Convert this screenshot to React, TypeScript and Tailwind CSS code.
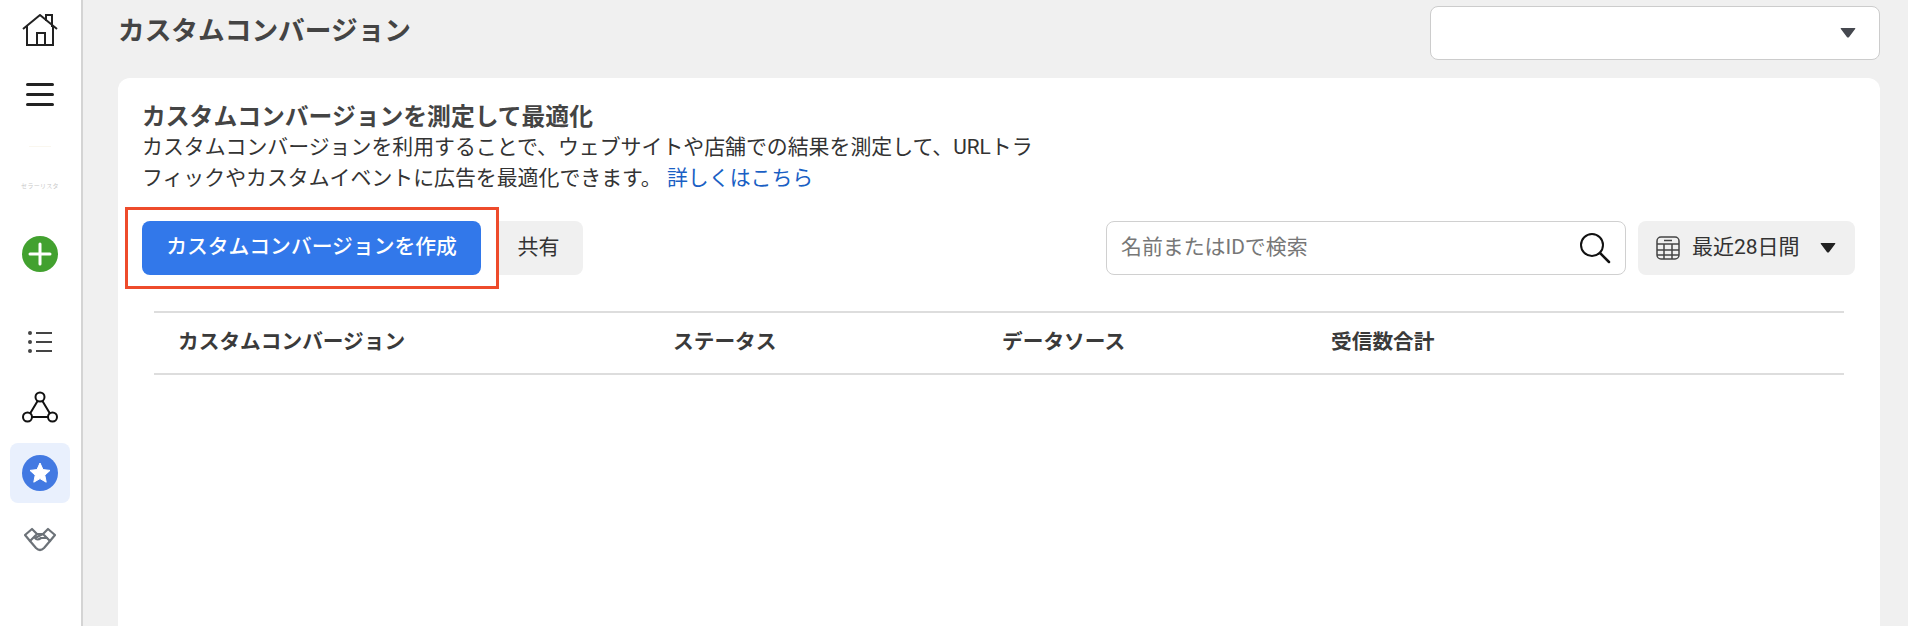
const jp = "font-['Roboto','Noto_Sans_CJK_JP',sans-serif]";

const HomeIcon = () => (
  <svg width="36" height="34" viewBox="0 0 36 34" fill="none" stroke="#222" strokeWidth="2">
    <path d="M1 15 L18 1 L35 15" strokeLinejoin="round" />
    <path d="M5 12 V31 H31 V12" />
    <path d="M15 31 V19 H23 V31" />
    <path d="M24 7 V1 H30 V13" />
  </svg>
);

const MenuIcon = () => (
  <div className="flex flex-col gap-[7px] w-[28px]">
    <div className="h-[3px] bg-[#222] rounded-sm" />
    <div className="h-[3px] bg-[#222] rounded-sm" />
    <div className="h-[3px] bg-[#222] rounded-sm" />
  </div>
);

const PlusIcon = () => (
  <svg width="36" height="36" viewBox="0 0 36 36">
    <circle cx="18" cy="18" r="18" fill="#42a12f" />
    <path d="M18 8 V28 M8 18 H28" stroke="#fff" strokeWidth="3" strokeLinecap="round" />
  </svg>
);

const ListIcon = () => (
  <svg width="26" height="24" viewBox="0 0 26 24" fill="#444">
    <circle cx="3" cy="3" r="2" />
    <circle cx="3" cy="12" r="2" />
    <circle cx="3" cy="21" r="2" />
    <rect x="9" y="2" width="16" height="2" />
    <rect x="9" y="11" width="16" height="2" />
    <rect x="9" y="20" width="16" height="2" />
  </svg>
);

const NetworkIcon = () => (
  <svg width="36" height="32" viewBox="0 0 36 32" fill="#fff" stroke="#111" strokeWidth="2">
    <path d="M18 6 L6 26 H30 Z" fill="none" />
    <circle cx="18" cy="6" r="4.5" />
    <circle cx="5.5" cy="26" r="4.5" />
    <circle cx="30.5" cy="26" r="4.5" />
  </svg>
);

const StarIcon = () => (
  <svg width="36" height="36" viewBox="0 0 36 36">
    <circle cx="18" cy="18" r="18" fill="#4279e2" />
    <path d="M18 8 L21 14.6 L28 15.4 L22.8 20.2 L24.2 27.2 L18 23.6 L11.8 27.2 L13.2 20.2 L8 15.4 L15 14.6 Z" fill="#fff" stroke="#fff" strokeLinejoin="round" />
  </svg>
);

const HandshakeIcon = () => (
  <svg width="32" height="26" viewBox="9 11 32 26" fill="none" stroke="#6c7278" strokeWidth="2.2" strokeLinejoin="round" strokeLinecap="round">
    <path d="M10 19 L17 13 L22 18 L15 25 Z" />
    <path d="M40 19 L33 13 L28 18 L35 25 Z" />
    <path d="M15 25 L21 32 Q25 36 29 32 L35 25" />
    <path d="M22 18 H28 L20 22 Q22 25 26 22 L32 22" />
  </svg>
);

const CaretIcon = ({ color }: { color: string }) => (
  <svg width="16" height="10" viewBox="0 0 14 9" fill={color}>
    <path d="M1 0 H13 Q14.2 0 13.4 1 L8 8 Q7 9 6 8 L0.6 1 Q-0.2 0 1 0 Z" />
  </svg>
);

const SearchIcon = () => (
  <svg width="32" height="32" viewBox="0 0 32 32" fill="none" stroke="#111" strokeWidth="2">
    <circle cx="13" cy="13" r="11" />
    <path d="M21 21 L30 30" strokeWidth="2.5" strokeLinecap="round" />
  </svg>
);

const CalendarIcon = () => (
  <svg width="24" height="24" viewBox="0 0 24 24" fill="none" stroke="#444" strokeWidth="1.5">
    <rect x="1" y="1" width="22" height="22" rx="4" />
    <path d="M1 8 H23 M1 14 H23 M1 19 H23 M8 8 V23 M16 8 V23" />
    <path d="M8 4.5 H16" />
  </svg>
);

const columns = [
  { label: "カスタムコンバージョン", width: "w-[495px]" },
  { label: "ステータス", width: "w-[329px]" },
  { label: "データソース", width: "w-[329px]" },
  { label: "受信数合計", width: "w-auto" },
];

export default function App() {
  return (
    <div className={`flex h-[626px] overflow-hidden bg-[#f0f0f0] ${jp}`}>
      <aside className="w-[83px] shrink-0 bg-white border-r-2 border-[#d4d4d4] flex flex-col items-center pt-[14px] pr-[1px]">
        <HomeIcon />
        <div className="mt-[35px]"><MenuIcon /></div>
        <div className="mt-[40px] h-[43px] flex flex-col items-center justify-between">
          <div className="w-[22px] h-[1px] bg-[#faf7ef]" />
          <span className="text-[6px] leading-none text-[#c9c9c9] tracking-wider">セラーリスタ</span>
        </div>
        <div className="mt-[47px]"><PlusIcon /></div>
        <div className="mt-[58px]"><ListIcon /></div>
        <div className="mt-[37px]"><NetworkIcon /></div>
        <div className="mt-[20px] w-[60px] h-[60px] rounded-lg bg-[#e9f0fd] flex items-center justify-center">
          <StarIcon />
        </div>
        <div className="mt-[24px]"><HandshakeIcon /></div>
      </aside>

      <main className="flex-1 min-w-0 flex flex-col pl-[35px] pr-[28px] pt-[6px]">
        <div className="flex items-center justify-between">
          <h1 className="text-[26.7px] font-bold text-[#444] -mt-[4px]">カスタムコンバージョン</h1>
          <div className="w-[450px] h-[54px] bg-white border border-[#cccccc] rounded-lg flex items-center justify-end pr-[23px]">
            <CaretIcon color="#45484f" />
          </div>
        </div>

        <section className="mt-[18px] flex-1 bg-white rounded-t-xl pt-[24px]">
          <div className="pl-[24px]">
            <h2 className="text-[23.8px] leading-[30px] font-bold text-[#444]">カスタムコンバージョンを測定して最適化</h2>
            <p className="whitespace-nowrap text-[20.9px] leading-[31px] text-[#333]">
              カスタムコンバージョンを利用することで、ウェブサイトや店舗での結果を測定して、URLトラ<br />
              フィックやカスタムイベントに広告を最適化できます。 <span className="text-[#1a5fc4]">詳しくはこちら</span>
            </p>
          </div>

          <div className="mt-[13px] flex items-center pl-[7px] pr-[25px]">
            <div className="border-[3px] border-[#ee4b2b] w-[374px] h-[82px] flex items-center pl-[14px] relative z-10">
              <button className="w-[339px] h-[54px] bg-[#3278ea] rounded-lg text-white text-[20.8px] font-medium">
                カスタムコンバージョンを作成
              </button>
            </div>
            <button className="w-[84px] h-[54px] bg-[#f0f0f0] rounded-r-lg text-[21px] text-[#333] pr-[5px]">共有</button>
            <div className="ml-auto w-[520px] h-[54px] border border-[#d0d0d0] rounded-lg flex items-center justify-between pl-[14px] pr-[14px]">
              <span className="text-[20.9px] text-[#777]">名前またはIDで検索</span>
              <SearchIcon />
            </div>
            <div className="ml-[12px] w-[217px] h-[54px] bg-[#f0f0f0] rounded-lg flex items-center pl-[18px] pr-[19px]">
              <CalendarIcon />
              <span className="ml-[12px] text-[21px] text-[#333]">最近28日間</span>
              <span className="ml-auto"><CaretIcon color="#222" /></span>
            </div>
          </div>

          <div className="ml-[36px] mr-[36px] mt-[22px] h-[64px] border-y-2 border-[#dddddd] flex items-center pl-[24px]">
            {columns.map((col) => (
              <div key={col.label} className={`${col.width} shrink-0 text-[20.7px] font-bold text-[#3a3a3a]`}>
                {col.label}
              </div>
            ))}
          </div>
        </section>
      </main>
    </div>
  );
}
